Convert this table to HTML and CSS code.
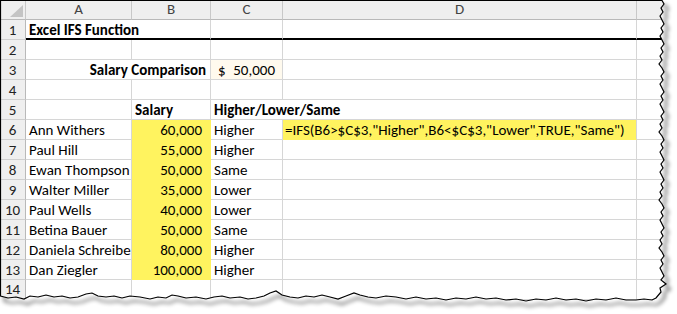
FILE: index.html
```html
<!DOCTYPE html>
<html>
<head>
<meta charset="utf-8">
<link rel="stylesheet" href="styles.css">
</head>
<body>
<div class="sheet">
  <div class="grid">
    <div class="hd corner"><svg class="tri" width="26" height="20" viewBox="0 0 26 20"><polygon points="10,17 23,17 23,5" fill="#c4c4c4"/></svg></div>
    <div class="hd col">A</div>
    <div class="hd col">B</div>
    <div class="hd col">C</div>
    <div class="hd col">D</div>
    <div class="hd col last"></div>

    <div class="rh">1</div>
    <div class="c thick bold s2">Excel IFS Function</div>
    <div class="c thick"></div>
    <div class="c thick"></div>
    <div class="c thick"></div>

    <div class="rh">2</div>
    <div class="c"></div><div class="c"></div><div class="c"></div><div class="c"></div><div class="c"></div>

    <div class="rh">3</div>
    <div class="c bold s2 right lab">Salary Comparison</div>
    <div class="c cream acct"><span>$</span><span>50,000</span></div>
    <div class="c"></div><div class="c"></div>

    <div class="rh">4</div>
    <div class="c"></div><div class="c"></div><div class="c"></div><div class="c"></div><div class="c"></div>

    <div class="rh">5</div>
    <div class="c"></div>
    <div class="c bold">Salary</div>
    <div class="c bold s2">Higher/Lower/Same</div>
    <div class="c"></div>

    <div class="rh">6</div>
    <div class="c">Ann Withers</div>
    <div class="c yel num">60,000</div>
    <div class="c">Higher</div>
    <div class="c yel formula">=IFS(B6&gt;$C$3,"Higher",B6&lt;$C$3,"Lower",TRUE,"Same")</div>
    <div class="c"></div>

    <div class="rh">7</div>
    <div class="c">Paul Hill</div>
    <div class="c yel num">55,000</div>
    <div class="c">Higher</div>
    <div class="c"></div><div class="c"></div>

    <div class="rh">8</div>
    <div class="c">Ewan Thompson</div>
    <div class="c yel num">50,000</div>
    <div class="c">Same</div>
    <div class="c"></div><div class="c"></div>

    <div class="rh">9</div>
    <div class="c">Walter Miller</div>
    <div class="c yel num">35,000</div>
    <div class="c">Lower</div>
    <div class="c"></div><div class="c"></div>

    <div class="rh">10</div>
    <div class="c">Paul Wells</div>
    <div class="c yel num">40,000</div>
    <div class="c">Lower</div>
    <div class="c"></div><div class="c"></div>

    <div class="rh">11</div>
    <div class="c">Betina Bauer</div>
    <div class="c yel num">50,000</div>
    <div class="c">Same</div>
    <div class="c"></div><div class="c"></div>

    <div class="rh">12</div>
    <div class="c">Daniela Schreiber</div>
    <div class="c yel num">80,000</div>
    <div class="c">Higher</div>
    <div class="c"></div><div class="c"></div>

    <div class="rh">13</div>
    <div class="c">Dan Ziegler</div>
    <div class="c yel num">100,000</div>
    <div class="c">Higher</div>
    <div class="c"></div><div class="c"></div>

    <div class="rh rh14">14</div>
    <div class="c"></div><div class="c"></div><div class="c"></div><div class="c"></div><div class="c"></div>
  </div>

  <svg class="tear" width="677" height="314" viewBox="0 0 677 314">
    <defs>
      <clipPath id="outside">
        <path clip-rule="evenodd" d="M0,0 H677 V314 H0 Z M0,0 L662,0 L664,4 L661,8 L663,12 L660,16 L662,20 L664,24 L661,28 L663,32 L660,36 L662,40 L664,44 L661,48 L663,52 L660,56 L662,60 L659,64 L662,68 L664,72 L661,76 L663,80 L660,84 L662,88 L664,92 L661,96 L663,100 L660,104 L662,108 L664,112 L661,116 L663,120 L660,124 L662,128 L659,132 L662,136 L664,140 L661,144 L663,148 L660,152 L662,156 L664,160 L661,164 L663,168 L660,172 L662,176 L664,180 L661,184 L663,188 L660,192 L662,196 L659,200 L662,204 L664,208 L661,212 L663,216 L660,220 L662,224 L664,228 L661,232 L663,236 L660,240 L662,244 L659,248 L662,252 L664,256 L661,260 L663,264 L660,268 L662,272 L664,276 L661,280 L666,284 L660,288 L661,292 L656,298 L652,300 L644,299 L636,300 L626,300 L616,298 L606,300 L596,299 L586,301 L576,299 L566,300 L556,298 L546,300 L536,299 L526,301 L516,299 L506,300 L496,298 L486,299 L476,297 L466,299 L456,298 L446,300 L436,298 L426,299 L416,297 L406,299 L396,297 L386,296 L376,298 L368,297 L360,295 L354,293 L346,296 L338,299 L330,297 L322,295 L314,297 L306,296 L298,298 L290,297 L282,295 L276,291 L270,293 L264,296 L256,298 L248,299 L240,297 L230,298 L222,296 L214,297 L206,299 L196,297 L186,298 L178,296 L172,295 L166,298 L158,297 L150,299 L140,297 L130,296 L122,298 L114,296 L106,297 L98,296 L92,293 L86,294 L78,297 L70,298 L62,296 L54,297 L46,295 L38,297 L30,296 L24,299 L16,297 L8,298 L0,296 Z"/>
      </clipPath>
      <filter id="blur" x="-10%" y="-10%" width="120%" height="120%">
        <feGaussianBlur stdDeviation="2.2"/>
      </filter>
    </defs>
    <g clip-path="url(#outside)">
      <rect x="0" y="0" width="677" height="314" fill="#fff"/>
      <use href="#paper" transform="translate(4,5)" fill="#222" stroke="none" filter="url(#blur)"/>
    </g>
    <path id="paper" fill="none" stroke="#000" stroke-width="1.2" d="M0.5,0.5 L662,0.5 L664,4 L661,8 L663,12 L660,16 L662,20 L664,24 L661,28 L663,32 L660,36 L662,40 L664,44 L661,48 L663,52 L660,56 L662,60 L659,64 L662,68 L664,72 L661,76 L663,80 L660,84 L662,88 L664,92 L661,96 L663,100 L660,104 L662,108 L664,112 L661,116 L663,120 L660,124 L662,128 L659,132 L662,136 L664,140 L661,144 L663,148 L660,152 L662,156 L664,160 L661,164 L663,168 L660,172 L662,176 L664,180 L661,184 L663,188 L660,192 L662,196 L659,200 L662,204 L664,208 L661,212 L663,216 L660,220 L662,224 L664,228 L661,232 L663,236 L660,240 L662,244 L659,248 L662,252 L664,256 L661,260 L663,264 L660,268 L662,272 L664,276 L661,280 L666,284 L660,288 L661,292 L656,298 L652,300 L644,299 L636,300 L626,300 L616,298 L606,300 L596,299 L586,301 L576,299 L566,300 L556,298 L546,300 L536,299 L526,301 L516,299 L506,300 L496,298 L486,299 L476,297 L466,299 L456,298 L446,300 L436,298 L426,299 L416,297 L406,299 L396,297 L386,296 L376,298 L368,297 L360,295 L354,293 L346,296 L338,299 L330,297 L322,295 L314,297 L306,296 L298,298 L290,297 L282,295 L276,291 L270,293 L264,296 L256,298 L248,299 L240,297 L230,298 L222,296 L214,297 L206,299 L196,297 L186,298 L178,296 L172,295 L166,298 L158,297 L150,299 L140,297 L130,296 L122,298 L114,296 L106,297 L98,296 L92,293 L86,294 L78,297 L70,298 L62,296 L54,297 L46,295 L38,297 L30,296 L24,299 L16,297 L8,298 L0.5,296 Z"/>
  </svg>
</div>
</body>
</html>
```

FILE: styles.css
```css
html, body {
  margin: 0;
  padding: 0;
  background: #fff;
}

.sheet {
  position: relative;
  width: 677px;
  height: 314px;
  overflow: hidden;
  font-family: Carlito, Calibri, Lato, "Liberation Sans", sans-serif;
  font-size: 15px;
  color: #000;
}

.grid {
  display: grid;
  grid-template-columns: 26px 106px 79px 72px 354px 60px;
  grid-auto-rows: 20px;
}

.hd {
  box-sizing: border-box;
  background: #efefef;
  border-right: 1px solid #c8c8c8;
  border-bottom: 1px solid #b9b9b9;
  color: #444;
  text-align: center;
  line-height: 19px;
  font-size: 15px;
}

.corner {
  position: relative;
}

.tri {
  display: block;
}

.rh {
  box-sizing: border-box;
  background: #efefef;
  border-right: 1px solid #b9b9b9;
  border-bottom: 1px solid #d0d0d0;
  color: #222;
  text-align: center;
  line-height: 21px;
  font-size: 15px;
}

.rh14 {
  line-height: 19px;
}

.c {
  box-sizing: border-box;
  border-right: 1px solid #d6d6d6;
  border-bottom: 1px solid #d6d6d6;
  padding: 0 3px;
  line-height: 21px;
  white-space: nowrap;
  overflow: hidden;
}

.s2 {
  grid-column: span 2;
}

.thick {
  border-bottom: 2px solid #000;
  line-height: 20px;
}

.bold {
  font-weight: 700;
}

.right {
  text-align: right;
}

.lab {
  padding-right: 4px;
}

.cream {
  background: #fffaee;
}

.acct {
  display: flex;
  justify-content: space-between;
  padding: 0 7px 0 7px;
}

.yel {
  background: #fff35f;
  border-right-color: #fff35f;
  border-bottom-color: #fff35f;
}

.num {
  text-align: right;
  padding-right: 8px;
}

.formula {
  padding-left: 2px;
  border-right-color: #d6d6d6;
}

.tear {
  position: absolute;
  left: 0;
  top: 0;
}
```
